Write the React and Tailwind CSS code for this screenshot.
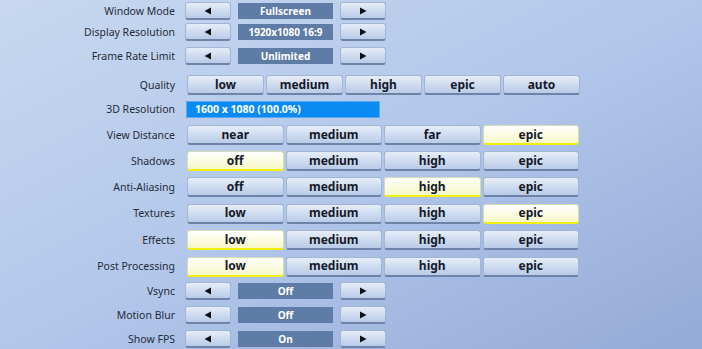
import React from "react";

const font = { fontFamily: '"Noto Sans", "DejaVu Sans", sans-serif' };

function Arrow({ dir }) {
  return (
    <svg width="8" height="8" viewBox="0 0 8 8">
      {dir === "left" ? (
        <polygon points="7,0.5 7,7.5 0.5,4" fill="#111" />
      ) : (
        <polygon points="1,0.5 1,7.5 7.5,4" fill="#111" />
      )}
    </svg>
  );
}

function Btn({ children, active, className = "" }) {
  return (
    <div
      className={
        "flex items-center justify-center rounded-[3px] border border-b-2 text-[12px] font-bold text-[#15192a] " +
        (active
          ? "bg-linear-to-b from-[#ffffff] to-[#f7f7c6] border-[#d8dcb0] border-b-[#f0ef10] "
          : "bg-linear-to-b from-[#e6edf8] to-[#b9cbe7] border-[#a2b5d3] border-b-[#6d83a8] ") +
        className
      }
    >
      {children}
    </div>
  );
}

function Label({ children }) {
  return (
    <div className="w-[187px] shrink-0 pr-[12px] text-right text-[10.5px] text-[#262c3a] leading-none">
      {children}
    </div>
  );
}

function Stepper({ label, value, top }) {
  return (
    <div className={"flex items-center h-[18px] " + top}>
      <Label>{label}</Label>
      <Btn className="w-[46px] h-[18px] -ml-[2px]">
        <Arrow dir="left" />
      </Btn>
      <div className="ml-[7px] w-[95px] h-[16px] bg-[#5f7ca6] flex items-center justify-center text-white text-[10px] font-bold">
        {value}
      </div>
      <Btn className="ml-[7px] w-[46px] h-[18px]">
        <Arrow dir="right" />
      </Btn>
    </div>
  );
}

function Choice({ label, options, active, top }) {
  return (
    <div className={"flex items-center h-[20px] " + top}>
      <Label>{label}</Label>
      <div className="grid grid-cols-4 gap-[2px] w-[392px] h-[20px]">
        {options.map((o, i) => (
          <Btn key={i} active={i === active} className="h-[20px]">
            {o}
          </Btn>
        ))}
      </div>
    </div>
  );
}

export default function App() {
  return (
    <div
      className="w-[702px] h-[349px] overflow-hidden bg-linear-to-br from-[#c7d8ef] via-[#b2c7ea] to-[#94aad7] pt-[2px]"
      style={font}
    >
      <Stepper label="Window Mode" value="Fullscreen" top="mt-0" />
      <Stepper label="Display Resolution" value="1920x1080 16:9" top="mt-[3px]" />
      <Stepper label="Frame Rate Limit" value="Unlimited" top="mt-[6px]" />

      <div className="flex items-center h-[20px] mt-[10px]">
        <Label>Quality</Label>
        <div className="grid grid-cols-5 gap-[2px] w-[393px] h-[20px]">
          {["low", "medium", "high", "epic", "auto"].map((o) => (
            <Btn key={o} className="h-[20px]">
              {o}
            </Btn>
          ))}
        </div>
      </div>

      <div className="flex items-center h-[17px] mt-[6px]">
        <Label>3D Resolution</Label>
        <div className="w-[194px] h-[17px] -ml-[1px] bg-[#0a8bf4] border border-[#5aa8ee] flex items-center pl-[8px] text-white text-[10.5px] font-bold">
          1600 x 1080 (100.0%)
        </div>
      </div>

      <Choice label="View Distance" options={["near", "medium", "far", "epic"]} active={3} top="mt-[7px]" />
      <Choice label="Shadows" options={["off", "medium", "high", "epic"]} active={0} top="mt-[6px]" />
      <Choice label="Anti-Aliasing" options={["off", "medium", "high", "epic"]} active={2} top="mt-[6px]" />
      <Choice label="Textures" options={["low", "medium", "high", "epic"]} active={3} top="mt-[6.5px]" />
      <Choice label="Effects" options={["low", "medium", "high", "epic"]} active={0} top="mt-[6.5px]" />
      <Choice label="Post Processing" options={["low", "medium", "high", "epic"]} active={0} top="mt-[6.5px]" />

      <Stepper label="Vsync" value="Off" top="mt-[5.5px]" />
      <Stepper label="Motion Blur" value="Off" top="mt-[6px]" />
      <Stepper label="Show FPS" value="On" top="mt-[6px]" />
    </div>
  );
}
